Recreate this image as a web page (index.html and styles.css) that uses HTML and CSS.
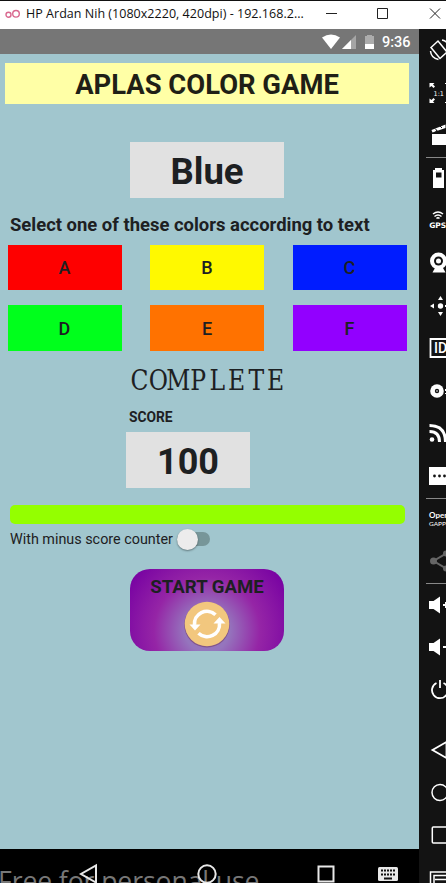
FILE: index.html
```html
<!DOCTYPE html>
<html lang="en">
<head>
<meta charset="utf-8">
<title>APLAS Color Game</title>
<link rel="stylesheet" href="styles.css">
</head>
<body>
<div class="window">
  <header class="titlebar">
    <svg class="logo" width="16" height="10" viewBox="0 0 16 10" fill="none" stroke="#d9688f" stroke-width="1.4"><circle cx="3.5" cy="5.8" r="2.5"/><circle cx="11" cy="4.8" r="3.3"/></svg>
    <span class="caption">HP Ardan Nih (1080x2220, 420dpi) - 192.168.2...</span>
    <svg class="controls" width="122" height="14" viewBox="0 0 122 14" fill="none" stroke="#222"><path d="M2 6.500h11M53.500 1.500h10v10h-10zM106 1.500l10 10M116 1.500l-10 10"/></svg>
  </header>
  <div class="body">
    <div class="phone">
      <div class="status">
        <svg width="54" height="16" viewBox="0 0 54 16" fill="#fff"><path d="M0 3.500Q9 -2.500 18 3.500L9 15z"/><path d="M34 1v14H20z" opacity=".35"/><path d="M29 6v9h-9z"/><path d="M45 1h5v1h2v13h-9V2h2z" opacity=".4"/><path d="M43 10h9v5h-9z"/></svg>
        <span class="clock">9:36</span>
      </div>
      <main class="screen">
        <h1 class="title">APLAS COLOR GAME</h1>
        <div class="word">Blue</div>
        <p class="hint">Select one of these colors according to text</p>
        <div class="colors">
          <button class="red">A</button><button class="yellow">B</button><button class="blue">C</button>
          <button class="green">D</button><button class="orange">E</button><button class="purple">F</button>
        </div>
        <svg class="result" width="160" height="34" viewBox="0 0 160 34"><text transform="scale(.87 1)" y="27" x="12 33.700 56.500 79.500 101.400 123.700 146.300 168.600">COMPLETE</text></svg>
        <div class="score-label">SCORE</div>
        <div class="score">100</div>
        <div class="progress"></div>
        <div class="option"><span>With minus score counter</span><i class="switch"></i></div>
        <button class="start">
          <span>START GAME</span>
          <svg width="48" height="48" viewBox="0 0 48 48"><circle cx="24" cy="24.800" r="22.800" fill="#74406a" opacity=".6"/><circle cx="24" cy="24" r="22.300" fill="#f2c77e"/><g fill="none" stroke="#fff" stroke-width="3.600"><path d="M11.500 25A12.500 12.500 0 0 1 32.500 14.700"/><path d="M36.500 23A12.500 12.500 0 0 1 15.500 33.300"/></g><path fill="#fff" d="M6.500 24.500h11l-5.500 6zM30.500 23.500h12l-6-6.500z"/></svg>
        </button>
      </main>
      <nav class="navbar">
        <span class="watermark">Free for personal use</span>
        <svg width="419" height="34" viewBox="0 0 419 34" fill="none" stroke="#e8e8e8" stroke-width="2"><path d="M96 16.500v17L81 25z"/><circle cx="207" cy="25" r="8.700"/><path d="M318.500 17.500h15v15h-15z"/><rect x="378" y="18" width="20" height="14" rx="1.500" fill="#e8e8e8" stroke="none"/><path d="M381 21.500h15M381 25.500h15" stroke="#111" stroke-dasharray="2 1"/><path d="M384 29.500h8" stroke="#111"/></svg>
      </nav>
    </div>
    <aside class="tools">
      <div class="group">
        <svg viewBox="0 0 27 42"><g class="line"><path d="M12 18.500L19 12l9 11-7 6.500zM11.500 22q.5 7 8 8.500M23 11q5 1 7 6"/></g></svg>
        <svg viewBox="0 0 27 42"><path d="M10.500 11h5l-1.500 1.500 2 2-1.500 1.500-2-2-2 1.500zM10.500 31h5L14 29.500l2-2-1.500-1.500-2 2-2-1.500zM26 11h1v1h-1zM26 30h1v1h-1z"/><text x="14.500" y="23.500" class="tiny">1:1</text></svg>
        <svg viewBox="0 0 27 42"><path d="M13 20h14v11H13zM12.500 16l14-5.500v3.500l-13 4.500z"/><path d="M16 19l2-3M21 19l2-3M16 14.500l2 2M21 12l2 2" stroke="#131313" stroke-width="1"/></svg>
      </div>
      <div class="group ruled">
        <svg viewBox="0 0 27 42"><path fill-rule="evenodd" d="M16 11h7v2h2v18H14V13h2zM17 15.500v5h5.500v-5z"/></svg>
        <svg viewBox="0 0 27 42"><g class="line"><path d="M14 15q5-4 10 0M15.500 17.500q3.500-3 7 0M17.500 19.500q1.500-1.500 3 0"/></g><text x="10.200" y="28.500" class="gps">GPS</text></svg>
        <svg viewBox="0 0 27 42"><circle cx="19.500" cy="19" r="8.500"/><circle cx="19.500" cy="19" r="4.500" fill="#131313"/><circle cx="19.500" cy="19" r="2.500"/><path d="M16 26h8l2.500 4.500h-13z"/></svg>
        <svg viewBox="0 0 27 42"><circle cx="21.500" cy="21" r="2.700"/><path d="M21.500 11l2.500 4h-5zM21.500 31l2.500-4h-5zM11 21l4-2.500v5zM27 20h-1v2h1z"/></svg>
        <svg viewBox="0 0 27 42"><path d="M28 12H11.500v18H28" fill="none" stroke="#fff" stroke-width="1.800"/><text x="15" y="26" class="id">ID</text></svg>
        <svg viewBox="0 0 27 42"><circle cx="18" cy="21" r="6.800"/><circle cx="18" cy="21" r="2.200" fill="#131313"/><circle cx="18" cy="21" r=".8"/><path d="M26 19h1v2h-1zM26 23h1v1h-1z"/></svg>
        <svg viewBox="0 0 27 42"><circle cx="13" cy="27.500" r="2.300"/><path d="M10.500 19.500q10 0 10 10.500M10.500 13.500q16 0 16 16.500" fill="none" stroke="#fff" stroke-width="3"/></svg>
        <svg viewBox="0 0 27 42"><path d="M10 12h17v18H10z"/><g fill="#131313"><circle cx="15.500" cy="21" r="1.400"/><circle cx="20.500" cy="21" r="1.400"/><circle cx="25.500" cy="21" r="1.400"/></g></svg>
      </div>
      <div class="group ruled">
        <svg viewBox="0 0 27 42"><text x="10" y="20" class="open">Open</text><text x="10" y="28" class="gapps">GAPPS</text></svg>
        <svg viewBox="0 0 27 42"><g fill="#666" stroke="#666" stroke-width="2"><circle cx="14.500" cy="21" r="2.500"/><path d="M27 13.500L14.500 21 27 28.500" fill="none"/><circle cx="27" cy="13.500" r="2"/><circle cx="27" cy="28.500" r="2"/></g></svg>
      </div>
      <div class="group ruled low">
        <svg viewBox="0 0 27 42"><path d="M10 17h4.500l6.500-4.500v17L14.500 25H10zM24 20h3v2h-3zM26 18h1v6h-1z"/></svg>
        <svg viewBox="0 0 27 42"><path d="M10 17h4.500l6.500-4.500v17L14.500 25H10zM24 20h3v2h-3z"/></svg>
        <svg viewBox="0 0 27 42"><path d="M17.500 14a8 8 0 1 0 7 0M21 11v8" fill="none" stroke="#fff" stroke-width="1.800"/></svg>
      </div>
      <div class="group nav">
        <svg viewBox="0 0 27 42"><path d="M27.500 13L13.500 21l14 8z" fill="none" stroke="#fff" stroke-width="1.800"/></svg>
        <svg viewBox="0 0 27 42"><circle cx="21" cy="21.500" r="8" fill="none" stroke="#fff" stroke-width="1.500"/></svg>
        <svg viewBox="0 0 27 42"><rect x="13.300" y="13" width="18" height="16" rx="1" fill="none" stroke="#fff" stroke-width="1.500"/></svg>
        <svg viewBox="0 0 27 42"><path d="M28 16H11.500v15M28 19.500H15V31M28 23.500H16" fill="none" stroke="#fff" stroke-width="1.500"/></svg>
      </div>
    </aside>
  </div>
</div>
</body>
</html>
```
FILE: styles.css
```css
* { box-sizing: border-box; }
body { margin: 0; font-family: Roboto, "Liberation Sans", sans-serif; color: #1d2022; overflow: hidden; }
button { border: 0; padding: 0; margin: 0; font: inherit; color: inherit; }
.window { width: 446px; height: 883px; overflow: hidden; display: flex; flex-direction: column; background: #131313; }
.titlebar { height: 29px; flex: none; display: flex; align-items: center; background: #fff; border-top: 1px solid #111; padding: 0 0 3px 5px; }
.logo { flex: none; }
.caption { margin-left: 5px; width: 299px; font: 12.500px/16px "Open Sans", "Noto Sans", sans-serif; letter-spacing: .03px; color: #111; white-space: nowrap; }
.controls { flex: none; }
.body { display: flex; flex: 1; min-height: 0; }
.phone { width: 419px; flex: none; display: flex; flex-direction: column; background: #a1c6ce; }
.status { height: 25px; flex: none; display: flex; justify-content: flex-end; align-items: center; background: #767676; padding: 1px 9px 0 0; }
.clock { margin-left: 6px; color: #fff; font-size: 14.500px; font-weight: 500; width: 28px; white-space: nowrap; }
.screen { flex: 1; min-height: 0; display: flex; flex-direction: column; padding: 9px 10px 0 5px; }
.title { margin: 0; height: 41px; background: #ffffa6; color: #1f1f16; text-align: center; font-size: 27.400px; line-height: 44px; font-weight: 700; white-space: nowrap; }
.word { width: 154px; height: 56px; margin: 38px 0 0 125px; background: #e1e1e1; text-align: center; font-size: 36.500px; line-height: 60px; font-weight: 700; }
.hint { margin: 15px 0 0 5px; font-size: 18.450px; line-height: 25px; height: 24px; font-weight: 700; white-space: nowrap; }
.colors { display: grid; grid-template-columns: repeat(3, 114px); grid-auto-rows: 45.500px; column-gap: 28.500px; row-gap: 15px; margin: 7.500px 0 0 2.500px; font-size: 18px; font-weight: 500; }
.colors button { padding-top: 1px; }
.red { background: #fe0000; }
.yellow { background: #fff900; }
.blue { background: #001cff; }
.green { background: #00ff1c; }
.orange { background: #ff7200; }
.purple { background: #9200ff; }
.result { display: block; flex: none; margin: 12.500px 0 0 124px; font-family: "DejaVu Serif", serif; font-size: 27px; text-anchor: middle; fill: #1d2022; }
.score-label { margin: 11px 0 0 124px; font-size: 13.800px; line-height: 18px; font-weight: 700; }
.score { width: 124px; height: 56px; margin: 6px 0 0 121px; background: #e1e1e1; text-align: center; font-size: 36px; line-height: 60px; font-weight: 700; }
.progress { width: 395px; height: 19px; margin: 17px 0 0 5px; border-radius: 5px; background: #94ff00; flex: none; }
.option { display: flex; align-items: center; height: 30px; margin-left: 5px; font-size: 14.350px; white-space: nowrap; flex: none; }
.option span { width: 167px; }
.switch { width: 33px; height: 14px; border-radius: 7px; background: #779699; display: flex; align-items: center; }
.switch::before { content: ""; width: 21px; height: 21px; border-radius: 50%; background: #ececec; box-shadow: 0 1px 2px #0006; flex: none; }
.start { width: 154px; height: 82px; flex: none; margin: 15px 0 0 125px; border-radius: 20px; background: radial-gradient(circle at 50% 75%, #9575bd 0, #9575bd 22px, #9525a6 53px, #7600a2 94px); display: flex; flex-direction: column; align-items: center; font-size: 18.600px; font-weight: 700; line-height: 22px; padding-top: 7px; white-space: nowrap; }
.start svg { margin-top: 2px; }
.navbar { height: 34px; flex: none; background: #000; position: relative; overflow: hidden; }
.navbar svg { display: block; position: relative; }
.watermark { position: absolute; left: -2px; top: 14px; font: 400 26.600px/36px "Open Sans", sans-serif; letter-spacing: -.1px; color: #777; white-space: nowrap; }
.tools { width: 27px; flex: none; background: #131313; }
.group { display: grid; grid-auto-rows: 42.600px; position: relative; }
.group svg { width: 27px; height: 42px; fill: #fff; display: block; }
.ruled::before { content: ""; position: absolute; left: 7px; right: 0; top: 0; height: 1px; background: #888; }
.low svg { margin-top: 1px; }
.nav { margin-top: 18px; }
.line { fill: none; stroke: #fff; stroke-width: 1.500; }
.tiny { font: 6.500px "DejaVu Sans", sans-serif; }
.gps { font: bold 7.500px "DejaVu Sans", sans-serif; }
.id { font: 500 14px Roboto, sans-serif; }
.open { font: bold 8px Lato, sans-serif; }
.gapps { font: 6.500px Lato, sans-serif; }
```
